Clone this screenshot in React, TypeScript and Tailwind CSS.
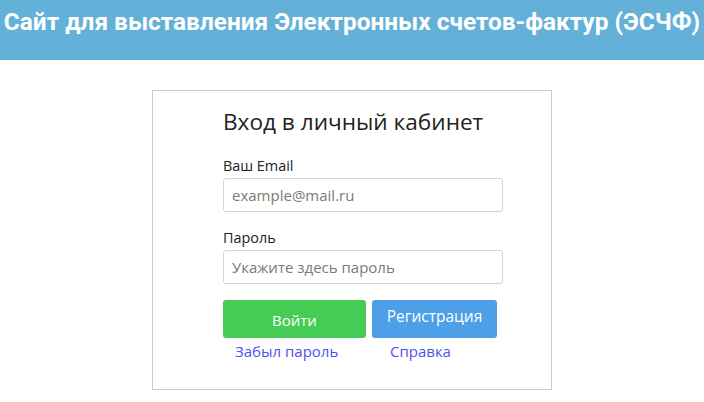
import React from 'react';

const LoginForm: React.FC = () => {
  return (
    <div className="w-[400px] h-[300px] border border-[#cccccc] bg-white mx-auto mt-[30px] pl-[70px] pt-[15px] font-['Open_Sans',sans-serif]">
      <h1 className="text-[22.6px] leading-[32px] text-[#222] font-normal">Вход в личный кабинет</h1>

      <label className="block mt-[18px] text-[14.4px] leading-[20px] text-[#222]">Ваш Email</label>
      <input
        type="text"
        placeholder="example@mail.ru"
        className="mt-[2px] w-[280px] h-[34px] border border-[#cfd4da] rounded-[3px] px-[8px] text-[15px] placeholder:text-[#7a7a7a] outline-none"
      />

      <label className="block mt-[16px] text-[14.4px] leading-[20px] text-[#222]">Пароль</label>
      <input
        type="password"
        placeholder="Укажите здесь пароль"
        className="mt-[2px] w-[280px] h-[34px] border border-[#cfd4da] rounded-[3px] px-[8px] text-[15px] placeholder:text-[#7a7a7a] outline-none"
      />

      <div className="flex gap-[6px] mt-[16px]">
        <button className="w-[143px] h-[38px] bg-[#44cc55] text-white text-[15px] rounded-[3px] pt-[2px]">Войти</button>
        <button className="w-[125px] h-[38px] bg-[#4da0e8] text-white text-[15.5px] rounded-[3px] pb-[4px]">Регистрация</button>
      </div>
      <div className="flex text-[15px] leading-[20px] text-[#4f4ff5] mt-[3px]">
        <a className="ml-[12px] w-[155px]">Забыл пароль</a>
        <a>Справка</a>
      </div>
    </div>
  );
};

const App: React.FC = () => {
  return (
    <div className="min-h-[402px] bg-white">
      <div className="h-[60px] bg-[#63b1d9] pt-[5px] text-center whitespace-nowrap">
        <span className="font-['Roboto',sans-serif] font-bold text-[24.4px] leading-[34px] text-white">
          Сайт для выставления Электронных счетов-фактур (ЭСЧФ)
        </span>
      </div>
      <LoginForm />
    </div>
  );
};

export default App;
